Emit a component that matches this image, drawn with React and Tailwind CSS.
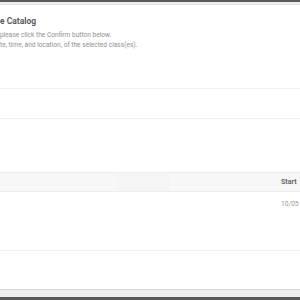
import React from 'react';

function App() {
    return (
        <div className="w-[300px] h-[300px] overflow-hidden bg-white flex flex-col text-[#555]" style={{ fontFamily: 'Roboto, "Liberation Sans", sans-serif' }}>
            {/* Window chrome top */}
            <div className="h-[2px] bg-[#5a5a5a] shrink-0"></div>
            <div className="h-[3px] bg-[#efefef] border-b border-[#e2e2e2] shrink-0"></div>

            {/* Header text */}
            <div className="h-[84px] shrink-0 border-b border-[#efefef] pt-[10px]">
                <h2 className="text-[8.5px] font-bold leading-[12px] text-[#5a5a5a]">e Catalog</h2>
                <div className="mt-[4px] text-[6.6px] leading-[9.5px] text-[#909090]">
                    <p>please click the Confirm button below.</p>
                    <p>te, time, and location, of the selected class(es).</p>
                </div>
            </div>

            <div className="h-[30px] shrink-0 border-b border-[#f0f0f0]"></div>
            <div className="h-[53px] shrink-0"></div>

            {/* Table */}
            <div className="h-[20px] shrink-0 bg-[#f7f7f7] border-y border-[#ececec] flex">
                <div className="w-[117px]"></div>
                <div className="w-[53px] bg-[#f5f5f5]"></div>
                <div className="flex-1"></div>
                <div className="w-[19px] flex items-center text-[7px] font-bold text-[#666] whitespace-nowrap">Start</div>
            </div>
            <div className="h-[59px] shrink-0 border-b border-[#f0f0f0] flex justify-end">
                <div className="w-[19px] pt-[8px] text-[6.6px] text-[#999] whitespace-nowrap overflow-hidden">10/05</div>
            </div>

            <div className="flex-1"></div>

            {/* Window chrome bottom */}
            <div className="h-[8px] bg-[#efefef] border-t border-[#d8d8d8] shrink-0"></div>
            <div className="h-[3px] bg-[#5a5a5a] shrink-0"></div>
        </div>
    );
}

export default App;
